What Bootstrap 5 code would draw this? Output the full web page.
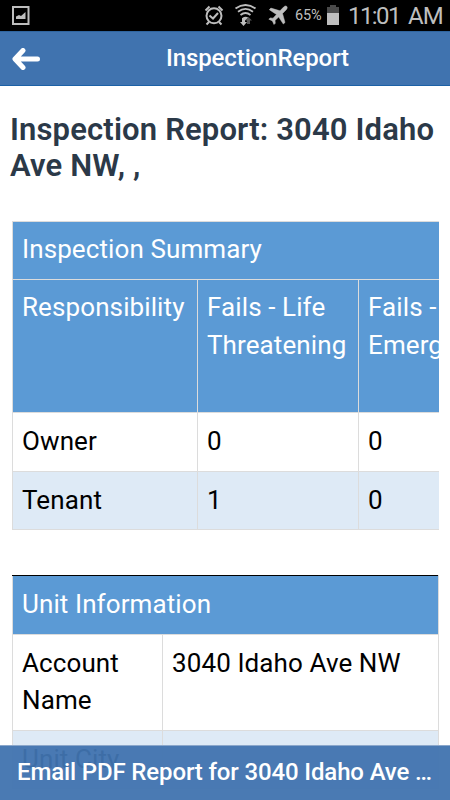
<!DOCTYPE html>
<html lang="en">
<head>
<meta charset="utf-8">
<meta name="viewport" content="width=device-width, initial-scale=1">
<title>InspectionReport</title>
<link href="https://cdn.jsdelivr.net/npm/bootstrap@5.3.0/dist/css/bootstrap.min.css" rel="stylesheet">
<style>
body { font-family: Roboto, "Liberation Sans", sans-serif; background: #fff; color: #000; }
.screen { height: 800px; width: 450px; }
.status { height: 31px; background: #000; color: #bebebe; }
.status .pct { font-size: 14.5px; line-height: 31px; letter-spacing: -.1px; width: 53px; }
.status .clock { font-size: 24px; line-height: 32px; width: 60px; letter-spacing: -1.6px; }
.status .ampm { font-size: 24px; line-height: 32px; width: 42px; letter-spacing: -1px; }
.titlebar { height: 55px; background: #4073af; border-bottom: 1px solid #1c61a6; border-top: 1px solid #2f659f; padding: 0 12px; }
.titlebar h1 { font-size: 24px; line-height: 53px; font-weight: 500; letter-spacing: -.1px; margin-left: 126px; }
.heading { font-size: 31px; line-height: 36px; font-weight: 600; color: #2b3948; letter-spacing: .15px; margin: 26px -5px 37px -2px; }
.report { padding: 0 11px 0 12px; }
.grid { border-collapse: collapse; table-layout: fixed; font-size: 26px; line-height: 37.5px; }
.grid td, .grid th { border: 1px solid #dcdcdc; padding: 10px 8px 10px 9px; vertical-align: top; font-weight: 400; letter-spacing: .1px; }
.grid th { padding-top: 9px; }
.grid .blue { background: #5b9ad5; color: #fff; }
.grid .pale { background: #deeaf6; }
.summary { width: 590px; }
.summary .caption-row { height: 58px; }
.summary .caption-row th { padding-bottom: 9px; }
.summary .label-row { height: 133px; }
.unit { width: 427px; margin-top: 45px; }
.unit .topline { border-top-color: #000; padding-top: 10px; }
.email { height: 55px; background: rgba(64,115,175,.95); border-top: 1px solid #8ba7cb; color: #fff; font-size: 24px; line-height: 53px; font-weight: 500; letter-spacing: -.14px; padding: 0 0 0 17px; }
</style>
<script src="https://cdn.jsdelivr.net/npm/bootstrap@5.3.0/dist/js/bootstrap.bundle.min.js"></script>
</head>
<body>
<div class="screen d-flex flex-column overflow-hidden position-relative">
  <div class="status d-flex align-items-center flex-shrink-0">
    <svg width="450" height="31" viewBox="0 0 450 31" class="position-absolute top-0 start-0" fill="none" stroke="#bebebe">
      <path d="M13 7h15.500v17H13z" stroke-width="2"/>
      <path d="M16 19v-2.500l3-1.500 2 1 4.500-4V19z" fill="#bebebe" stroke="none"/>
      <g stroke-width="2">
        <circle cx="214" cy="15.800" r="7.500"/>
        <path d="M209.500 15.500l3.500 3 5-5.500M205.500 10.500l4-4M222.500 10.500l-4-4M209 22l-2.500 2.500M219 22l2.500 2.500"/>
      </g>
      <g stroke-width="1.800">
        <path d="M235.500 8.500q10-7 20 0M238 11.700q7.500-5.500 15 0M240.500 15q5-4 10 0"/>
      </g>
      <path d="M242.500 17.700q3-2 6 0l-3 2.500z" fill="#bebebe" stroke="none"/>
      <path d="M242 18h3v4h2l-3.500 4-3.500-4h2z" fill="#bebebe" stroke="none"/>
      <path d="M248.500 17l3.500 3.500h-2V24h-3v-3.500h-2z" fill="#555" stroke="none"/>
      <path d="M286.500 6.200c1.200 1 .8 2.500-.5 3.800l-3.500 3.500 2.500 9-1.700 1.500-4.600-7-3.700 3.500.3 2.700-1.300 1.300-1.600-3.600-3.600-1.700 1.400-1.300 2.800.3 3.500-3.700-7.200-4.800 1.600-1.600 9.100 2.700 3.600-3.700c1-1 2.200-1.500 2.900-.9z" fill="#bebebe" stroke="#bebebe" stroke-width=".5"/>
      <path d="M330 5h6v2h3v7h-12V7h3z" fill="#4a4a4a" stroke="none"/>
      <path d="M327 13h12v12h-12z" fill="#bebebe" stroke="none"/>
    </svg>
    <span class="pct ms-auto">65%</span>
    <span class="clock">11:01</span>
    <span class="ampm">AM</span>
  </div>
  <header class="titlebar d-flex align-items-center flex-shrink-0 text-white">
    <svg width="28" height="22" viewBox="0 0 28 22" fill="none" stroke="#fff" stroke-width="5" stroke-linecap="round" stroke-linejoin="round"><path d="M11 2.500L3 11l8 8.500M4 11h21.500"/></svg>
    <h1 class="mb-0">InspectionReport</h1>
  </header>
  <main class="report flex-grow-1 overflow-hidden">
    <h2 class="heading">Inspection Report: 3040 Idaho Ave NW, ,</h2>
    <div class="overflow-hidden">
      <table class="grid summary">
        <colgroup><col style="width:185px"><col style="width:161px"><col></colgroup>
        <tr class="blue caption-row"><th colspan="3">Inspection Summary</th></tr>
        <tr class="blue label-row"><th>Responsibility</th><th>Fails - Life Threatening</th><th>Fails - Non<br>Emergency</th></tr>
        <tr><td>Owner</td><td>0</td><td>0</td></tr>
        <tr class="pale"><td>Tenant</td><td>1</td><td>0</td></tr>
      </table>
    </div>
    <table class="grid unit">
      <colgroup><col style="width:150px"><col></colgroup>
      <tr class="blue"><th colspan="2" class="topline">Unit Information</th></tr>
      <tr><td>Account Name</td><td>3040 Idaho Ave NW</td></tr>
      <tr class="pale"><td>Unit City</td><td></td></tr>
    </table>
  </main>
  <div class="email position-absolute bottom-0 start-0 w-100 text-nowrap overflow-hidden">Email PDF Report for 3040 Idaho Ave …</div>
</div>
</body>
</html>
